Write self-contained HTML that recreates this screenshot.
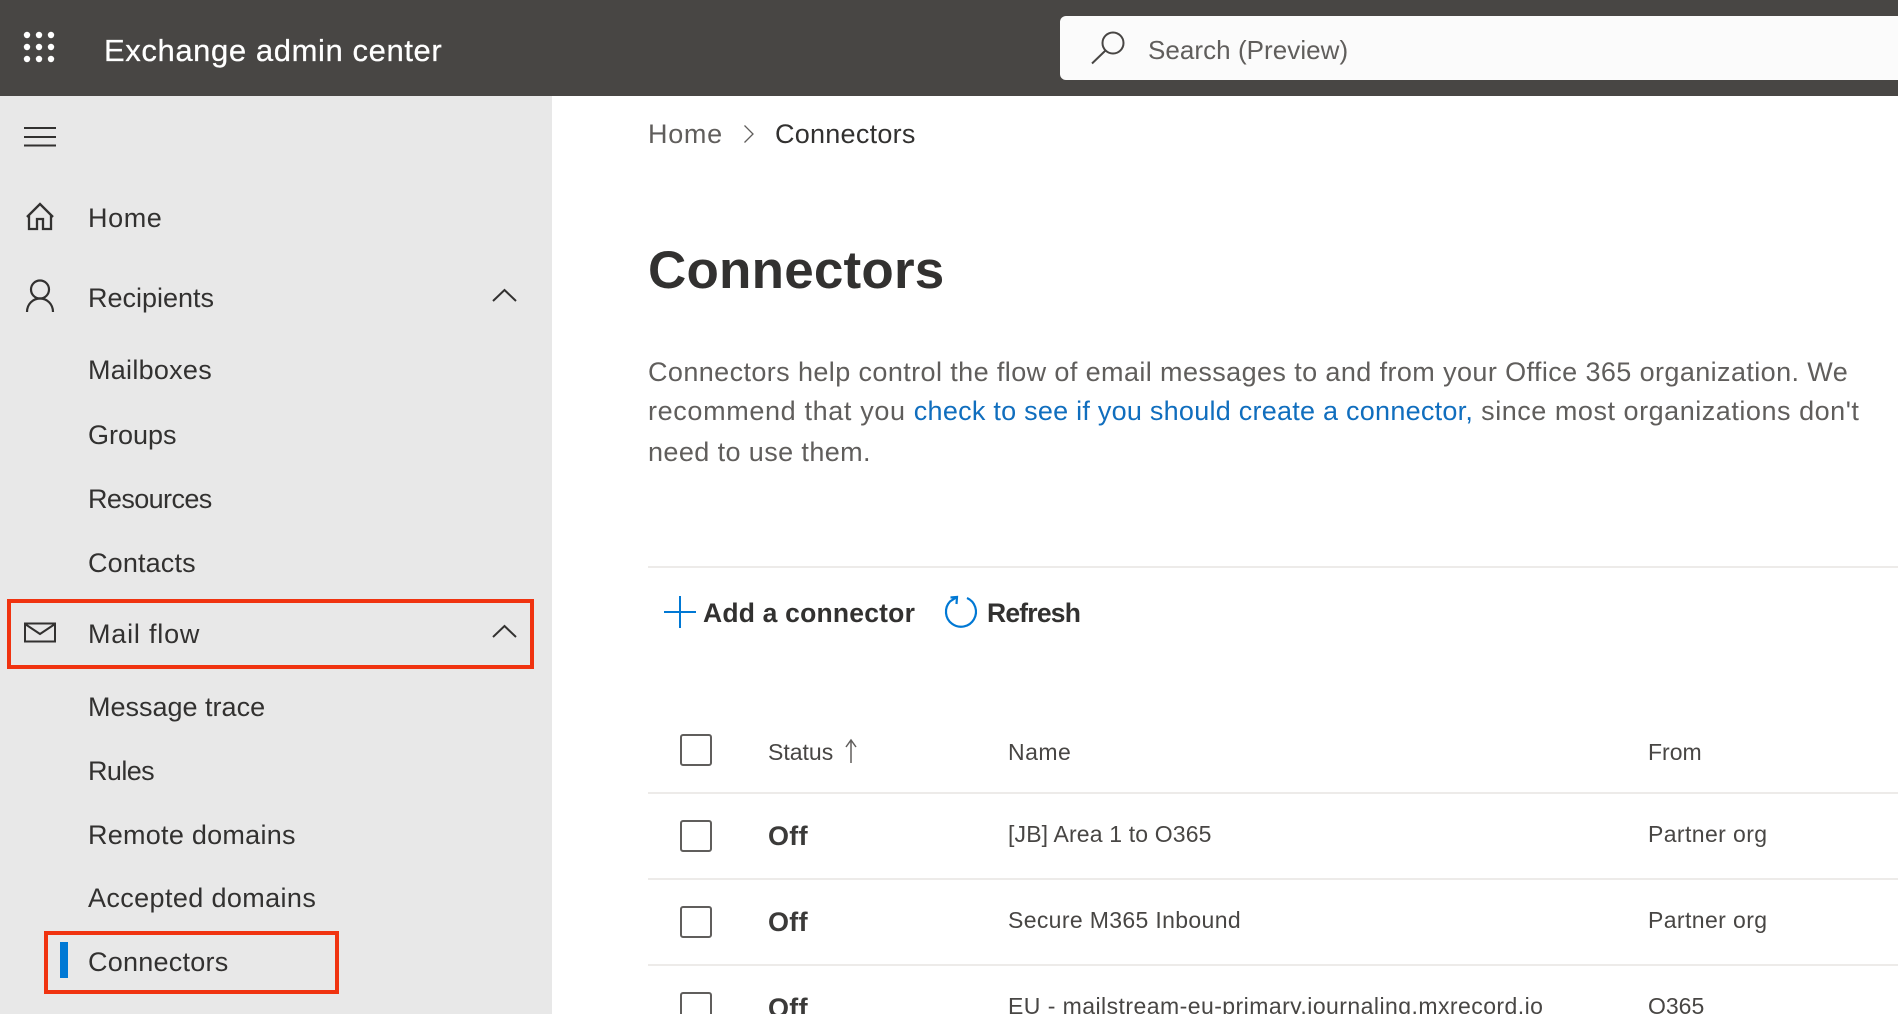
<!DOCTYPE html>
<html lang="en"><head><meta charset="utf-8"><title>Exchange admin center</title>
<style>
html,body{margin:0;padding:0;width:1898px;height:1014px;overflow:hidden;background:#fff}
body{position:relative;font-family:"Liberation Sans",sans-serif;color:#323130}
.a{position:absolute}
.t{position:absolute;white-space:nowrap;line-height:40px;height:40px}
.n{left:88px;font-size:27px;color:#323130}
.p{left:648px;font-size:27px;color:#605e5c;letter-spacing:.4px}
.c{font-size:23px;color:#484644}
.o{left:768px;font-size:27px;font-weight:bold;color:#3b3a39;letter-spacing:.3px}
.cb{position:absolute;left:680px;width:28px;height:28px;border:2px solid #605e5c;border-radius:3px}
.hr{position:absolute;left:648px;right:0;height:2px;background:#edebe9}
.box{position:absolute;border:4px solid #f03310;box-sizing:border-box}
svg{position:absolute;overflow:visible}
</style></head><body>
<div class="a" style="left:0;top:0;width:1898px;height:96px;background:#484644"></div>
<svg style="left:0;top:0" width="70" height="70" fill="#fff">
<circle cx="27" cy="35" r="3.2"/><circle cx="39" cy="35" r="3.2"/><circle cx="51" cy="35" r="3.2"/>
<circle cx="27" cy="47" r="3.2"/><circle cx="39" cy="47" r="3.2"/><circle cx="51" cy="47" r="3.2"/>
<circle cx="27" cy="59" r="3.2"/><circle cx="39" cy="59" r="3.2"/><circle cx="51" cy="59" r="3.2"/>
</svg>
<div class="t" style="left:104px;top:31px;font-size:31px;letter-spacing:.6px;color:#fff;-webkit-text-stroke:.25px #fff">Exchange admin center</div>
<div class="a" style="left:1060px;top:16px;width:838px;height:64px;background:#fbfbfb;border-radius:6px 0 0 6px"></div>
<svg style="left:1090px;top:30px" width="40" height="40" fill="none" stroke="#484644" stroke-width="2"><circle cx="23" cy="13" r="10.5"/><path d="M15.5 20.5L2 33.500"/></svg>
<div class="t" style="left:1148px;top:30px;font-size:26px;color:#605e5c;letter-spacing:.05px">Search (Preview)</div>

<div class="a" style="left:0;top:96px;width:552px;height:918px;background:#e8e8e8"></div>
<svg style="left:24px;top:126px" width="32" height="22" stroke="#323130" stroke-width="2"><path d="M0 2H32M0 11H32M0 19.500H32"/></svg>
<svg style="left:26px;top:202px" width="28" height="29" fill="none" stroke="#323130" stroke-width="2.300"><path d="M1 15L14 2L27 15M3 12.500V27H11V17H17V27H25V12.500"/></svg>
<div class="t n" style="top:198px;letter-spacing:.6px">Home</div>
<svg style="left:26px;top:280px" width="28" height="33" fill="none" stroke="#323130" stroke-width="2.200"><circle cx="14" cy="9.500" r="9"/><path d="M1 32C1 24 7 18.500 14 18.500C21 18.500 27 24 27 32"/></svg>
<div class="t n" style="top:278px">Recipients</div>
<svg style="left:492px;top:288px" width="25" height="14" fill="none" stroke="#323130" stroke-width="2"><path d="M1 13L12.500 2L24 13"/></svg>
<div class="t n" style="top:350px;letter-spacing:.27px">Mailboxes</div>
<div class="t n" style="top:415px">Groups</div>
<div class="t n" style="top:479px;letter-spacing:-.6px">Resources</div>
<div class="t n" style="top:543px;letter-spacing:.15px">Contacts</div>
<svg style="left:24px;top:622px" width="32" height="21" fill="none" stroke="#323130" stroke-width="2"><path d="M1 1.500H31V19.500H1ZM1 2L16 12L31 2"/></svg>
<div class="t n" style="top:614px;letter-spacing:.8px">Mail flow</div>
<svg style="left:492px;top:624px" width="25" height="14" fill="none" stroke="#323130" stroke-width="2"><path d="M1 13L12.500 2L24 13"/></svg>
<div class="t n" style="top:687px">Message trace</div>
<div class="t n" style="top:751px;letter-spacing:-.6px">Rules</div>
<div class="t n" style="top:815px;letter-spacing:.26px">Remote domains</div>
<div class="t n" style="top:878px;letter-spacing:.38px">Accepted domains</div>
<div class="t n" style="top:942px;letter-spacing:.24px">Connectors</div>
<div class="a" style="left:60px;top:942px;width:8px;height:36px;background:#0078d4"></div>
<div class="box" style="left:7px;top:599px;width:527px;height:70px"></div>
<div class="box" style="left:44px;top:931px;width:295px;height:63px"></div>

<div class="t" style="left:648px;top:114px;font-size:27px;color:#605e5c;letter-spacing:.7px">Home</div>
<svg style="left:743px;top:124px" width="12" height="20" fill="none" stroke="#605e5c" stroke-width="1.300"><path d="M1.500 1.500L10 10L1.500 18.500"/></svg>
<div class="t" style="left:775px;top:114px;font-size:27px;color:#323130;letter-spacing:.25px">Connectors</div>
<div class="t" style="left:648px;top:251px;font-size:53px;font-weight:bold;color:#323130;letter-spacing:.2px">Connectors</div>
<div class="t p" style="top:352px">Connectors help control the flow of email messages to and from your Office 365 organization. We</div>
<div class="t p" style="top:391px;letter-spacing:.64px">recommend that you <span style="color:#106ebe;letter-spacing:.25px">check to see if you should create a connector,</span><span style="letter-spacing:.53px"> since most organizations don't</span></div>
<div class="t p" style="top:432px">need to use them.</div>

<div class="hr" style="top:566px"></div>
<svg style="left:664px;top:596px" width="32" height="32" stroke="#0078d4" stroke-width="2"><path d="M0 16H32M16 0V32"/></svg>
<div class="t" style="left:703px;top:593px;font-size:26.500px;font-weight:bold;color:#323130;letter-spacing:.2px">Add a connector</div>
<svg style="left:944px;top:594px" width="36" height="36" fill="none" stroke="#0078d4" stroke-width="2.200"><path d="M23 4A15 15 0 1 1 6 7.500L13 3M6.500 3.500L13 3L12.500 10"/></svg>
<div class="t" style="left:987px;top:593px;font-size:26.500px;font-weight:bold;color:#323130;letter-spacing:-.8px">Refresh</div>

<div class="cb" style="top:734px"></div>
<div class="t c" style="left:768px;top:732px">Status</div>
<svg style="left:845px;top:739px" width="12" height="25" fill="none" stroke="#605e5c" stroke-width="1.500"><path d="M6 24V1M1 8L6 1L11 8"/></svg>
<div class="t c" style="left:1008px;top:732px;letter-spacing:.5px">Name</div>
<div class="t c" style="left:1648px;top:732px">From</div>
<div class="hr" style="top:792px"></div>

<div class="cb" style="top:820px"></div>
<div class="t o" style="top:816px">Off</div>
<div class="t c" style="left:1008px;top:814px;letter-spacing:.15px">[JB] Area 1 to O365</div>
<div class="t c" style="left:1648px;top:814px;letter-spacing:.4px">Partner org</div>
<div class="hr" style="top:878px"></div>

<div class="cb" style="top:906px"></div>
<div class="t o" style="top:902px">Off</div>
<div class="t c" style="left:1008px;top:900px;letter-spacing:.35px">Secure M365 Inbound</div>
<div class="t c" style="left:1648px;top:900px;letter-spacing:.4px">Partner org</div>
<div class="hr" style="top:964px"></div>

<div class="cb" style="top:992px"></div>
<div class="t o" style="top:988px">Off</div>
<div class="t c" style="left:1008px;top:986px;letter-spacing:.45px">EU - mailstream-eu-primary.journaling.mxrecord.io</div>
<div class="t c" style="left:1648px;top:986px">O365</div>
</body></html>
